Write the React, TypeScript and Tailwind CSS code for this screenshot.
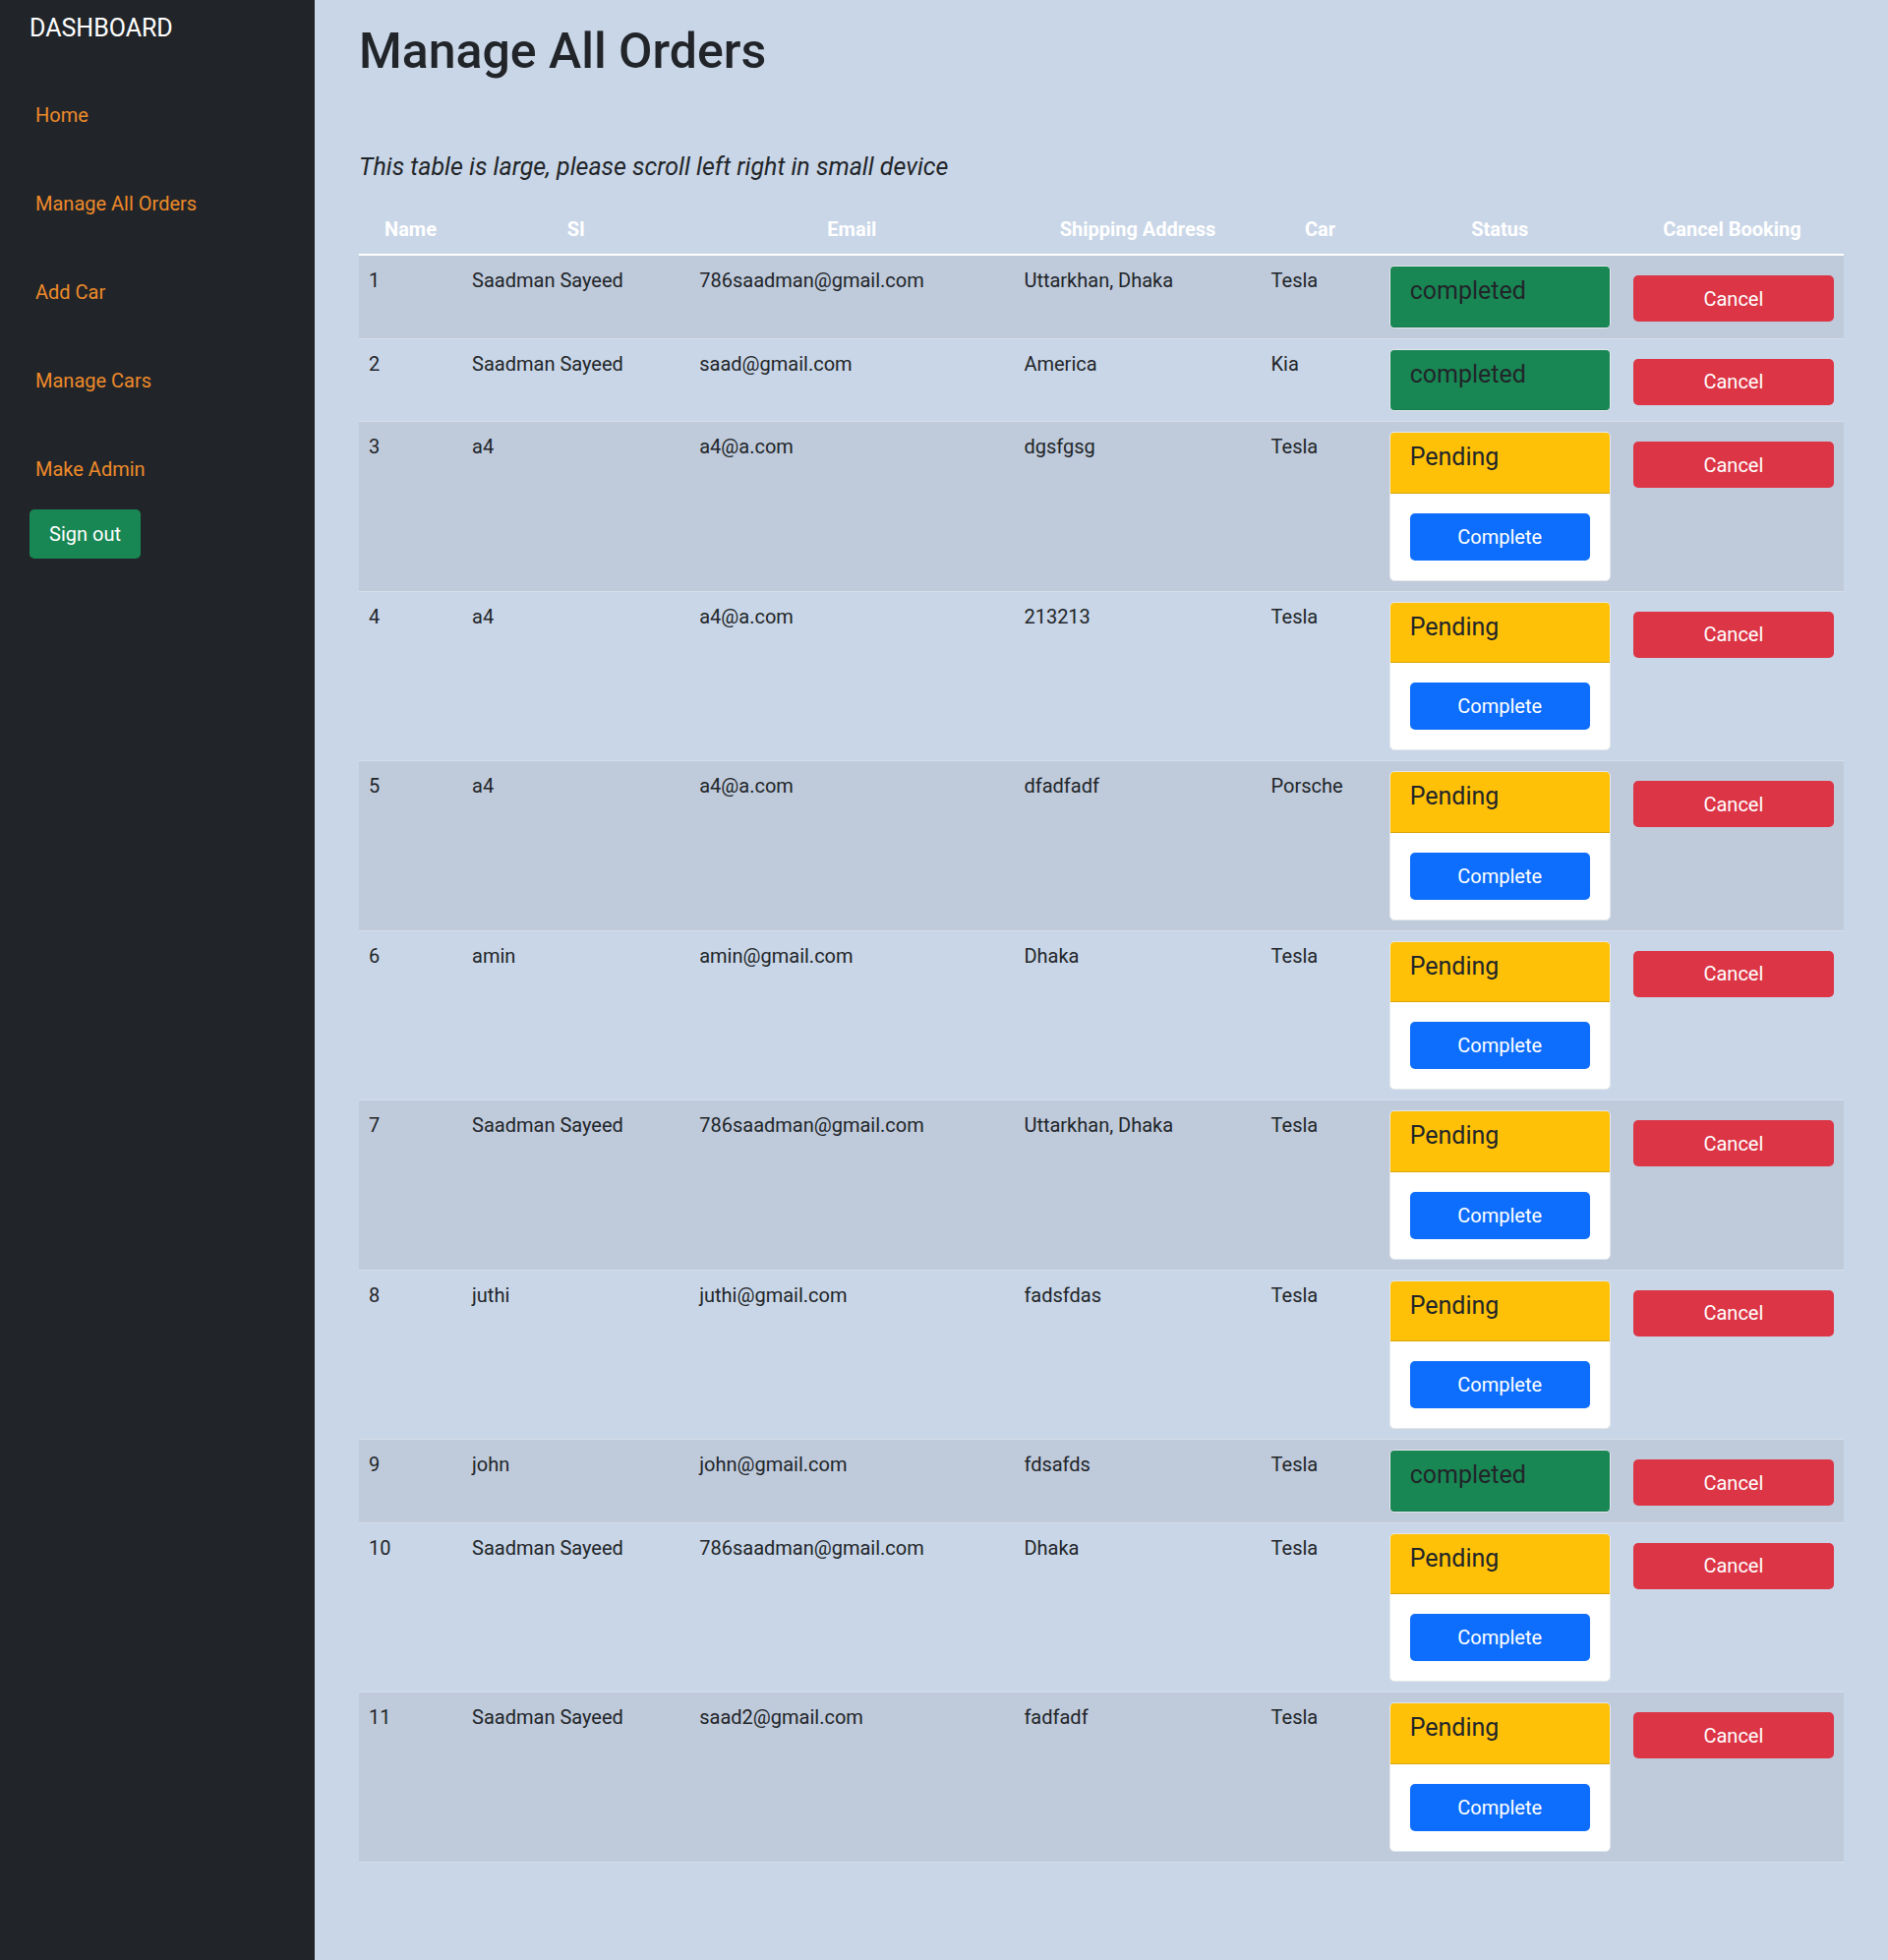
import React from "react";

type Order = {
  id: number;
  name: string;
  email: string;
  address: string;
  car: string;
  status: "completed" | "Pending";
};

const orders: Order[] = [
  { id: 1, name: "Saadman Sayeed", email: "786saadman@gmail.com", address: "Uttarkhan, Dhaka", car: "Tesla", status: "completed" },
  { id: 2, name: "Saadman Sayeed", email: "saad@gmail.com", address: "America", car: "Kia", status: "completed" },
  { id: 3, name: "a4", email: "a4@a.com", address: "dgsfgsg", car: "Tesla", status: "Pending" },
  { id: 4, name: "a4", email: "a4@a.com", address: "213213", car: "Tesla", status: "Pending" },
  { id: 5, name: "a4", email: "a4@a.com", address: "dfadfadf", car: "Porsche", status: "Pending" },
  { id: 6, name: "amin", email: "amin@gmail.com", address: "Dhaka", car: "Tesla", status: "Pending" },
  { id: 7, name: "Saadman Sayeed", email: "786saadman@gmail.com", address: "Uttarkhan, Dhaka", car: "Tesla", status: "Pending" },
  { id: 8, name: "juthi", email: "juthi@gmail.com", address: "fadsfdas", car: "Tesla", status: "Pending" },
  { id: 9, name: "john", email: "john@gmail.com", address: "fdsafds", car: "Tesla", status: "completed" },
  { id: 10, name: "Saadman Sayeed", email: "786saadman@gmail.com", address: "Dhaka", car: "Tesla", status: "Pending" },
  { id: 11, name: "Saadman Sayeed", email: "saad2@gmail.com", address: "fadfadf", car: "Tesla", status: "Pending" },
];

const navLinks = ["Home", "Manage All Orders", "Add Car", "Manage Cars", "Make Admin"];

function StatusCard({ status }: { status: Order["status"] }) {
  const done = status === "completed";
  return (
    <div className="bg-white border border-[#e3e7ec] rounded-[5px] overflow-hidden">
      <div
        className={
          done
            ? "bg-[#198754] px-[20px] py-[10px] border-b border-black/10"
            : "bg-[#ffc107] px-[20px] py-[10px] border-b border-black/15"
        }
      >
        <h5 className="text-[25px] leading-[30px] mb-[10.5px] text-[#212529]">{status}</h5>
      </div>
      {!done && (
        <div className="p-[20px]">
          <button className="w-full h-[48px] bg-[#0d6efd] text-white text-[20px] rounded-[5px]">
            Complete
          </button>
        </div>
      )}
    </div>
  );
}

export default function App() {
  return (
    <div
      className="flex min-h-screen text-[#212529]"
      style={{ fontFamily: '"Segoe UI", Roboto, "Open Sans", sans-serif' }}
    >
      {/* Sidebar */}
      <aside className="w-[320px] shrink-0 bg-[#212529] pt-[14px] px-[30px]">
        <div className="text-white text-[25px] leading-[30px]">DASHBOARD</div>
        <ul className="mt-[58px] pl-[6px] flex flex-col gap-[60px]">
          {navLinks.map((link) => (
            <li key={link} className="text-[20px] leading-[30px] text-[#ee8a2a]">
              {link}
            </li>
          ))}
        </ul>
        <button className="mt-[26px] h-[50px] px-[20px] bg-[#198754] text-white text-[20px] rounded-[5px]">
          Sign out
        </button>
      </aside>

      {/* Main */}
      <main className="flex-1 bg-[#c9d6e7] px-[45px] pb-[100px]">
        <h1 className="mt-[22px] text-[50px] leading-[60px] font-medium">Manage All Orders</h1>
        <h5 className="mt-[73px] text-[25px] leading-[30px] italic">
          This table is large, please scroll left right in small device
        </h5>

        <table className="mt-[23px] w-full table-fixed border-collapse text-[20px] leading-[30px]">
          <colgroup>
            <col className="w-[105px]" />
            <col className="w-[231px]" />
            <col className="w-[330px]" />
            <col className="w-[251px]" />
            <col className="w-[120px]" />
            <col className="w-[245px]" />
            <col className="w-[227px]" />
          </colgroup>
          <thead>
            <tr className="border-b-2 border-white">
              <th className="p-[10px] font-bold text-white text-center">Name</th>
              <th className="p-[10px] font-bold text-white text-center">Sl</th>
              <th className="p-[10px] font-bold text-white text-center">Email</th>
              <th className="p-[10px] font-bold text-white text-center">Shipping Address</th>
              <th className="p-[10px] font-bold text-white text-center">Car</th>
              <th className="p-[10px] font-bold text-white text-center">Status</th>
              <th className="p-[10px] font-bold text-white text-center">Cancel Booking</th>
            </tr>
          </thead>
          <tbody>
            {orders.map((o, i) => (
              <tr
                key={o.id}
                className={
                  i % 2 === 0
                    ? "bg-[#bfcadb] border-b border-[#d6dee9] align-top"
                    : "border-b border-[#d6dee9] align-top"
                }
              >
                <td className="p-[10px]">{o.id}</td>
                <td className="p-[10px]">{o.name}</td>
                <td className="p-[10px]">{o.email}</td>
                <td className="p-[10px]">{o.address}</td>
                <td className="p-[10px]">{o.car}</td>
                <td className="p-[10px]">
                  <StatusCard status={o.status} />
                </td>
                <td className="p-[10px] pl-[13px]">
                  <button className="mt-[10px] w-full h-[47px] bg-[#dc3545] text-white rounded-[5px]">
                    Cancel
                  </button>
                </td>
              </tr>
            ))}
          </tbody>
        </table>
      </main>
    </div>
  );
}
